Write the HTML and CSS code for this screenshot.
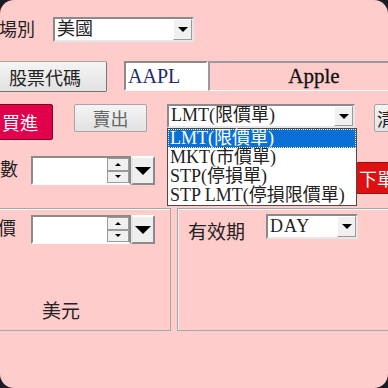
FILE: index.html
```html
<!DOCTYPE html>
<html lang="zh-Hant">
<head>
  <meta charset="UTF-8" />
  <meta name="viewport" content="width=device-width, initial-scale=1.0" />
  <title>下單</title>
  <link rel="stylesheet" href="styles.css">
</head>
<body>

  <div class="screen">
    <div class="form">

      <div class="row row-market">
        <span class="label label-market">場別</span>
        <div class="select select-market">
          <span class="select-text">美國</span>
          <span class="select-btn"><i class="tri"></i></span>
        </div>
      </div>

      <div class="row row-symbol">
        <button class="btn btn-symbol">股票代碼</button>
        <div class="field field-symbol">AAPL</div>
        <div class="name-box">Apple</div>
      </div>

      <div class="row row-side">
        <button class="btn btn-buy">買進</button>
        <button class="btn btn-sell">賣出</button>
        <div class="select select-type">
          <span class="select-text">LMT(限價單)</span>
          <span class="select-btn"><i class="tri"></i></span>
          <ul class="drop-list">
            <li class="active">LMT(限價單)</li>
            <li>MKT(市價單)</li>
            <li>STP(停損單)</li>
            <li>STP LMT(停損限價單)</li>
          </ul>
        </div>
        <button class="btn btn-clear">清</button>
      </div>

      <div class="row row-qty">
        <span class="label label-qty">數</span>
        <div class="spin">
          <div class="spin-field"></div>
          <div class="spin-arrows">
            <span><i class="tri tri-up"></i></span>
            <span><i class="tri tri-small"></i></span>
          </div>
          <div class="spin-drop"><i class="tri tri-big"></i></div>
        </div>
        <button class="btn btn-order">下單</button>
      </div>

      <div class="row row-groups">
        <div class="group group-price">
          <div class="group-row">
            <span class="label label-price">價</span>
            <div class="spin">
              <div class="spin-field"></div>
              <div class="spin-arrows">
                <span><i class="tri tri-up"></i></span>
                <span><i class="tri tri-small"></i></span>
              </div>
              <div class="spin-drop"><i class="tri tri-big"></i></div>
            </div>
          </div>
          <div class="currency">美元</div>
        </div>

        <div class="group group-tif">
          <div class="group-row">
            <span class="label label-tif">有效期</span>
            <div class="select select-tif">
              <span class="select-text">DAY</span>
              <span class="select-btn"><i class="tri"></i></span>
            </div>
          </div>
        </div>
      </div>

    </div>
  </div>

</body>
</html>
```

FILE: styles.css
```css
* {
  box-sizing: border-box;
}
html, body {
  margin: 0;
  padding: 0;
  background: #1c1a22;
}
body {
  width: 388px;
  height: 388px;
  overflow: hidden;
  font-family: 'Liberation Serif', 'Noto Sans CJK TC', serif;
  color: #222;
}
.screen {
  width: 388px;
  height: 388px;
  background: #ffcccc;
  border-radius: 14px;
  overflow: hidden;
}
.form {
  margin-left: -24px;
  width: 560px;
  display: flex;
  flex-direction: column;
}
.row {
  display: flex;
  align-items: flex-start;
}
.row > *,
.group-row > * {
  flex-shrink: 0;
}
.label {
  font-size: 18px;
  line-height: 22px;
  text-align: right;
  white-space: nowrap;
  color: #222;
}

/* row 1 */
.row-market {
  margin-top: 17px;
  align-items: center;
}
.label-market {
  width: 59px;
}
.select-market {
  margin-left: 18px;
  width: 141px;
  height: 25px;
}

/* generic select */
.select {
  position: relative;
  display: flex;
  background: #fff;
  border: 2px solid;
  border-color: #8a8a8a #e6e6e6 #e6e6e6 #8a8a8a;
  font-size: 18px;
}
.select-text {
  flex: 1;
  padding-left: 2px;
  line-height: 20px;
  white-space: nowrap;
}
.select-btn {
  width: 19px;
  background: #f0f0f0;
  border: 1px solid;
  border-color: #fff #9a9a9a #9a9a9a #fff;
  display: flex;
  align-items: center;
  justify-content: center;
}
.tri {
  display: block;
  width: 0;
  height: 0;
  border-left: 5px solid transparent;
  border-right: 5px solid transparent;
  border-top: 5px solid #000;
}
.tri-up {
  border-left-width: 3px;
  border-right-width: 3px;
  border-top: 0;
  border-bottom: 3px solid #000;
}
.tri-small {
  border-left-width: 3px;
  border-right-width: 3px;
  border-top-width: 3px;
}
.tri-big {
  border-left-width: 8px;
  border-right-width: 8px;
  border-top-width: 8px;
}

/* row 2 */
.row-symbol {
  margin-top: 19px;
}
.btn {
  font-family: 'Liberation Serif', 'Noto Sans CJK TC', serif;
  font-size: 18px;
  padding: 0;
  margin: 0;
  border: 1px solid #a5a5a5;
  border-radius: 2px;
  background: linear-gradient(#f4f4f4, #e2e2e2);
  color: #222;
  white-space: nowrap;
  overflow: hidden;
}
.btn-symbol {
  margin-left: 7px;
  width: 124px;
  height: 31px;
  border-right-color: #777;
  border-bottom-color: #777;
}
.field-symbol {
  margin-left: 17px;
  width: 84px;
  height: 30px;
  background: #fff;
  border: 2px solid;
  border-color: #8a8a8a #fff #fff #8a8a8a;
  font-size: 20px;
  line-height: 26px;
  padding-left: 2px;
  color: #1e2a6a;
}
.name-box {
  width: 210px;
  height: 30px;
  border-top: 2px solid #9a9a9a;
  border-left: 2px solid #9a9a9a;
  border-bottom: 1px solid #fff;
  text-align: center;
  font-size: 21px;
  line-height: 27px;
  color: #111;
  -webkit-text-stroke: 0.3px #111;
}

/* row 3 */
.row-side {
  margin-top: 12px;
}
.btn-buy {
  margin-left: 7px;
  width: 70px;
  height: 36px;
  background: #e0004c;
  border: 1px solid #8a0022;
  color: #fff;
  padding-left: 4px;
}
.btn-sell {
  margin-left: 21px;
  width: 73px;
  height: 28px;
  color: #666;
}
.select-type {
  margin-left: 20px;
  width: 188px;
  height: 24px;
}
.select-type .select-text {
  line-height: 19px;
}
.drop-list {
  position: absolute;
  z-index: 10;
  top: 22px;
  left: -2px;
  width: 190px;
  margin: 0;
  padding: 0;
  list-style: none;
  background: #fff;
  border: 1px solid #4a4a4a;
  font-size: 18px;
}
.drop-list li {
  height: 19px;
  line-height: 19px;
  padding-left: 2px;
  white-space: nowrap;
}
.drop-list li.active {
  background: #0a70d8;
  color: #fff;
  outline: 1px dotted #ffd;
  outline-offset: -1px;
}
.btn-clear {
  margin-left: 19px;
  width: 30px;
  height: 28px;
  text-align: left;
  padding-left: 2px;
}

/* row 4 */
.row-qty {
  margin-top: 16px;
}
.label-qty {
  width: 42px;
  line-height: 29px;
}
.spin {
  display: flex;
  width: 124px;
  height: 29px;
  margin-left: 13px;
}
.spin-field {
  width: 76px;
  background: #fff;
  border: 2px solid;
  border-color: #8a8a8a transparent #fff #8a8a8a;
  border-right: 0;
}
.spin-arrows {
  width: 24px;
  display: flex;
  flex-direction: column;
  border: 2px solid;
  border-color: #8a8a8a #8a8a8a #fff transparent;
  border-left: 0;
}
.spin-arrows span {
  flex: 1;
  background: #f0f0f0;
  border: 1px solid #9a9a9a;
  display: flex;
  align-items: center;
  justify-content: center;
}
.spin-drop {
  width: 24px;
  background: #efefef;
  border: 2px solid;
  border-color: #fff #8a8a8a #8a8a8a #e6e6e6;
  display: flex;
  align-items: center;
  justify-content: center;
}
.btn-order {
  margin-left: 201px;
  margin-top: 6px;
  width: 40px;
  height: 32px;
  background: #dd1111;
  border: 1px solid #991010;
  color: #fff;
  text-align: left;
  padding-left: 2px;
}

/* groups */
.row-groups {
  margin-top: 14px;
}
.group {
  height: 123px;
  border: 1px solid #a6a6a6;
  box-shadow: inset 1px 1px 0 #f4f4f4;
}
.group-row {
  display: flex;
  align-items: flex-start;
}
.group-price {
  width: 195px;
  padding-top: 6px;
}
.label-price {
  width: 39px;
  line-height: 29px;
}
.group-price .spin {
  margin-left: 15px;
}
.currency {
  margin-top: 57px;
  margin-left: 65px;
  font-size: 19px;
  line-height: 22px;
}
.group-tif {
  margin-left: 6px;
  width: 240px;
  padding-top: 5px;
  padding-left: 10px;
}
.label-tif {
  width: 57px;
  font-size: 19px;
  margin-top: 8px;
  text-align: left;
}
.select-tif {
  margin-left: 21px;
  width: 92px;
  height: 25px;
}
.select-tif .select-text {
  letter-spacing: 1px;
}
```
